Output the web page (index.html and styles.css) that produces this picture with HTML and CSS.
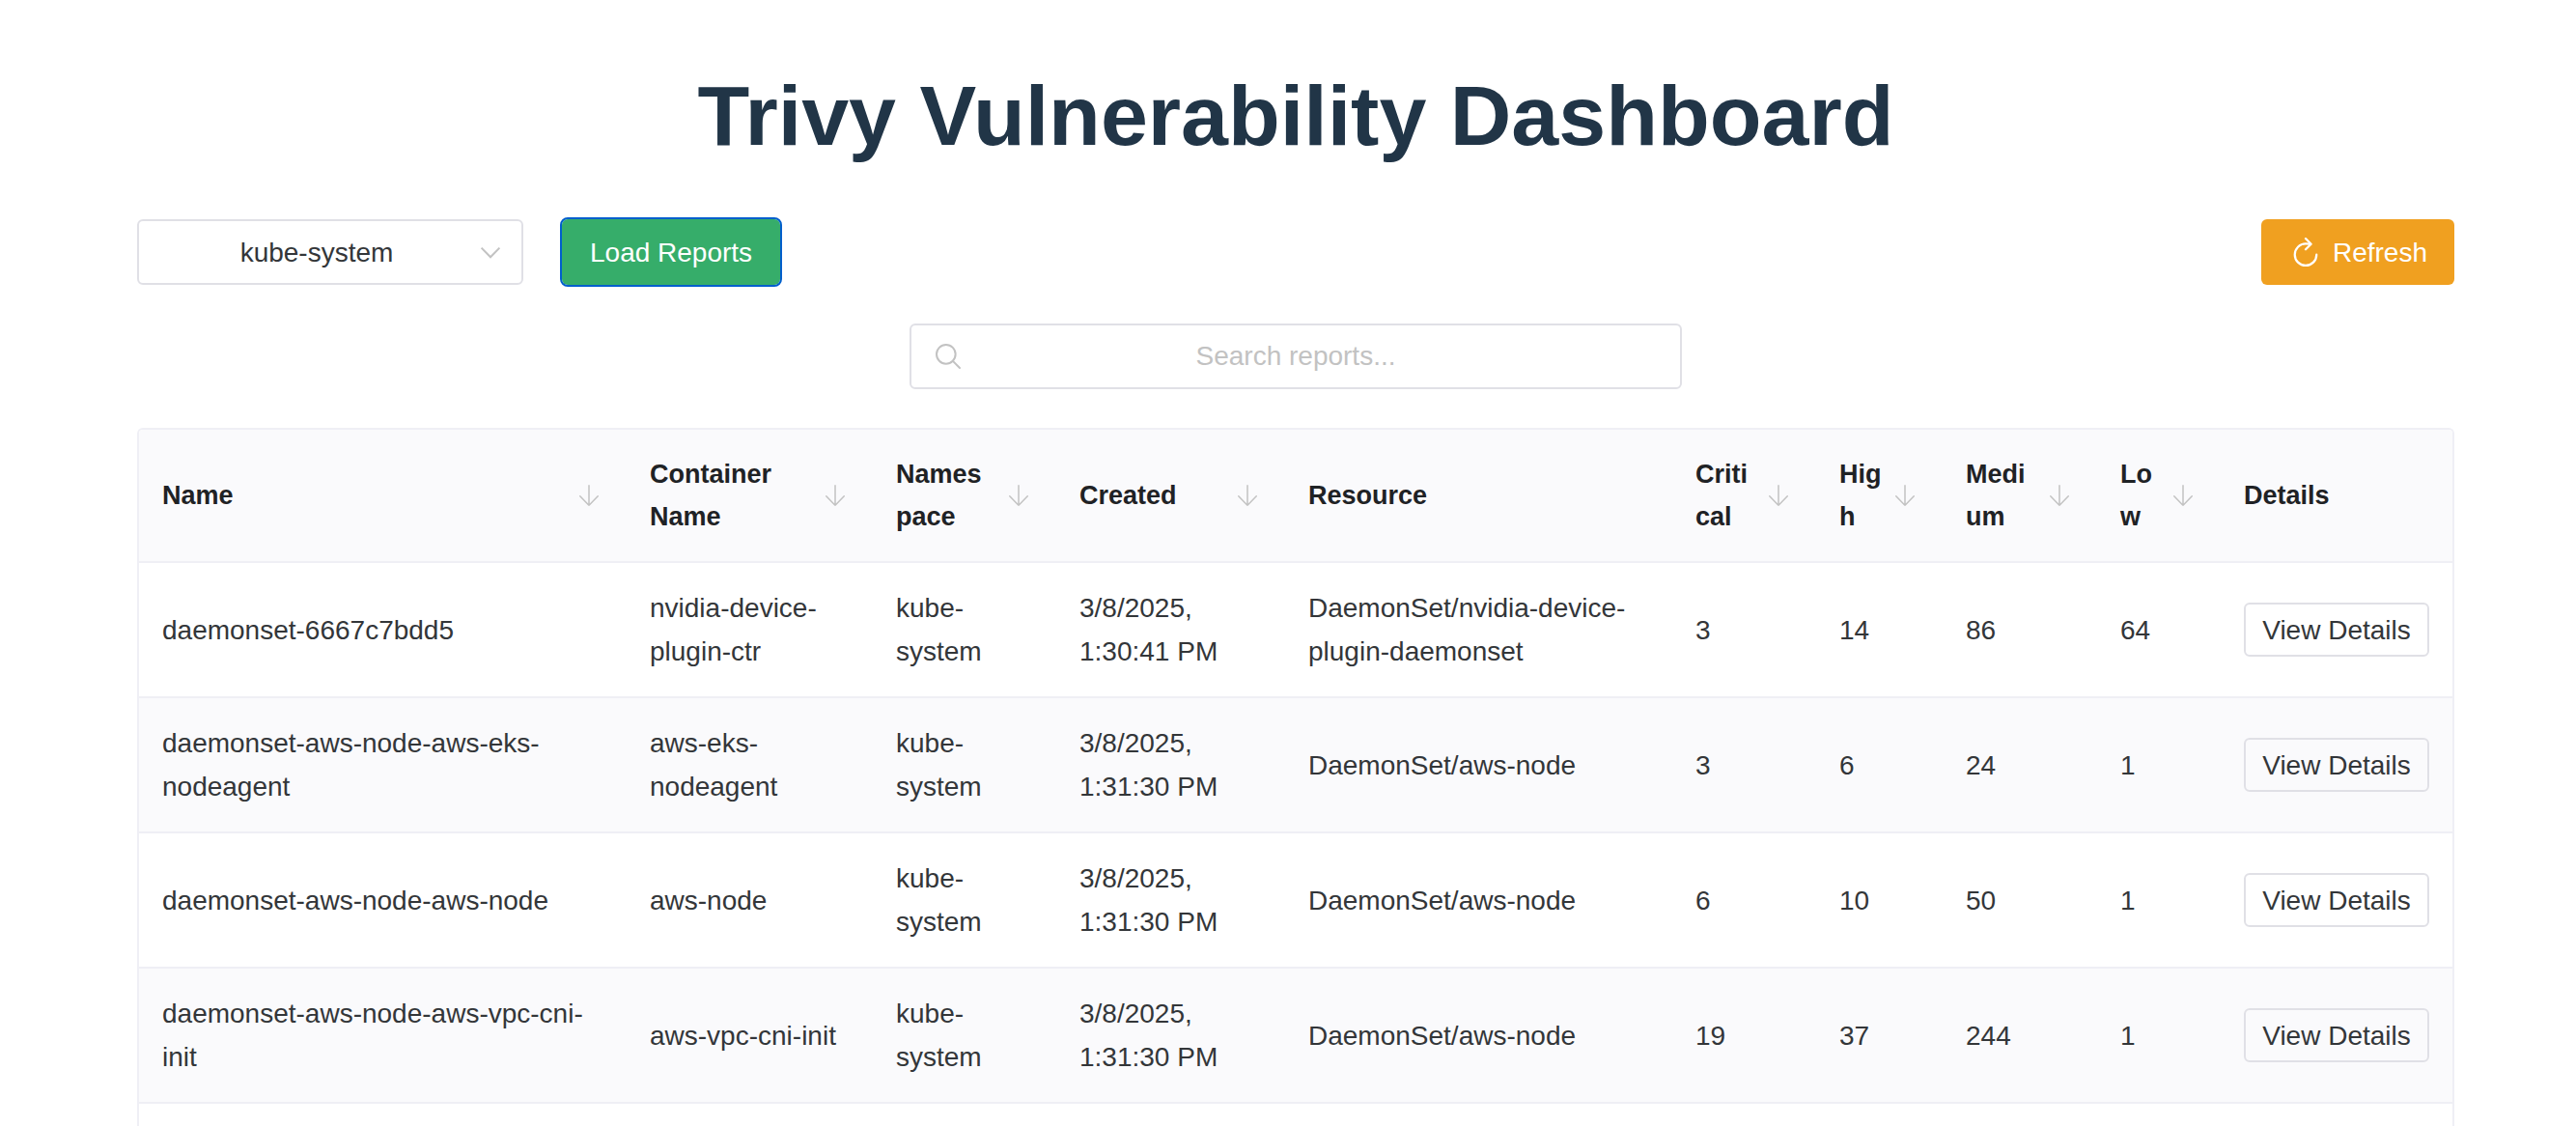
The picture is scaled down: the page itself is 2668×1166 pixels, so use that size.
FILE: index.html
```html
<!DOCTYPE html>
<html lang="en">
<head>
<meta charset="utf-8">
<meta name="viewport" content="width=device-width, initial-scale=1">
<title>Trivy Vulnerability Dashboard</title>
<link rel="stylesheet" href="styles.css">
</head>
<body>
<svg class="sprite" aria-hidden="true">
  <symbol id="arrow-down" viewBox="0 0 28 28">
    <path d="M23.79 15.26a.75.75 0 0 0-1.08-1.04l-7.96 8.27V3.75a.75.75 0 0 0-1.5 0v18.74l-7.96-8.27a.75.75 0 0 0-1.08 1.04l8.96 9.31a1.15 1.15 0 0 0 1.66 0z" fill="currentColor"/>
  </symbol>
</svg>
<main class="dashboard">
  <h1 class="title">Trivy Vulnerability Dashboard</h1>

  <div class="controls">
    <div class="select">
      <select class="select-input" aria-label="Namespace">
        <option>kube-system</option>
      </select>
      <svg class="select-icon" viewBox="0 0 16 16" aria-hidden="true"><path d="M3.3 5.8L8 10.6l4.7-4.8" fill="none" stroke="currentColor"/></svg>
    </div>
    <button class="btn btn-load" type="button">Load Reports</button>
    <button class="btn btn-refresh" type="button">
      <svg class="btn-icon" viewBox="0 0 512 512" aria-hidden="true"><path d="M320 146s24.36-12-64-12a160 160 0 1 0 160 160" fill="none" stroke="currentColor" stroke-linecap="round" stroke-miterlimit="10" stroke-width="32"/><path d="M256 58l80 80-80 80" fill="none" stroke="currentColor" stroke-linecap="round" stroke-linejoin="round" stroke-width="32"/></svg>
      Refresh
    </button>
  </div>

  <div class="search">
    <svg class="search-icon" viewBox="0 0 512 512" aria-hidden="true"><path d="M221.09 64a157.09 157.09 0 1 0 157.09 157.09A157.1 157.1 0 0 0 221.09 64z" fill="none" stroke="currentColor" stroke-miterlimit="10" stroke-width="32"/><path d="M338.29 338.29L448 448" fill="none" stroke="currentColor" stroke-linecap="round" stroke-miterlimit="10" stroke-width="32"/></svg>
    <input class="search-input" type="text" placeholder="Search reports..." aria-label="Search reports">
  </div>

  <div class="table-wrap">
    <table class="table">
      <colgroup>
        <col class="col-name"><col class="col-container"><col class="col-namespace"><col class="col-created"><col class="col-resource"><col class="col-critical"><col class="col-high"><col class="col-medium"><col class="col-low"><col class="col-details">
      </colgroup>
      <thead>
        <tr>
          <th scope="col"><div class="th"><span class="th-label">Name</span><svg class="sort"><use href="#arrow-down"/></svg></div></th>
          <th scope="col"><div class="th"><span class="th-label">Container Name</span><svg class="sort"><use href="#arrow-down"/></svg></div></th>
          <th scope="col"><div class="th"><span class="th-label">Namespace</span><svg class="sort"><use href="#arrow-down"/></svg></div></th>
          <th scope="col"><div class="th"><span class="th-label">Created</span><svg class="sort"><use href="#arrow-down"/></svg></div></th>
          <th scope="col">Resource</th>
          <th scope="col"><div class="th"><span class="th-label">Critical</span><svg class="sort"><use href="#arrow-down"/></svg></div></th>
          <th scope="col"><div class="th"><span class="th-label">High</span><svg class="sort"><use href="#arrow-down"/></svg></div></th>
          <th scope="col"><div class="th"><span class="th-label">Medium</span><svg class="sort"><use href="#arrow-down"/></svg></div></th>
          <th scope="col"><div class="th"><span class="th-label">Low</span><svg class="sort"><use href="#arrow-down"/></svg></div></th>
          <th scope="col">Details</th>
        </tr>
      </thead>
      <tbody>
        <tr>
          <td>daemonset-6667c7bdd5</td><td>nvidia-device-plugin-ctr</td><td>kube-system</td><td>3/8/2025, 1:30:41 PM</td><td>DaemonSet/nvidia-device-plugin-daemonset</td><td>3</td><td>14</td><td>86</td><td>64</td>
          <td><button class="btn-view" type="button">View Details</button></td>
        </tr>
        <tr>
          <td>daemonset-aws-node-aws-eks-nodeagent</td><td>aws-eks-nodeagent</td><td>kube-system</td><td>3/8/2025, 1:31:30 PM</td><td>DaemonSet/aws-node</td><td>3</td><td>6</td><td>24</td><td>1</td>
          <td><button class="btn-view" type="button">View Details</button></td>
        </tr>
        <tr>
          <td>daemonset-aws-node-aws-node</td><td>aws-node</td><td>kube-system</td><td>3/8/2025, 1:31:30 PM</td><td>DaemonSet/aws-node</td><td>6</td><td>10</td><td>50</td><td>1</td>
          <td><button class="btn-view" type="button">View Details</button></td>
        </tr>
        <tr>
          <td>daemonset-aws-node-aws-vpc-cni-init</td><td>aws-vpc-cni-init</td><td>kube-system</td><td>3/8/2025, 1:31:30 PM</td><td>DaemonSet/aws-node</td><td>19</td><td>37</td><td>244</td><td>1</td>
          <td><button class="btn-view" type="button">View Details</button></td>
        </tr>
      </tbody>
    </table>
  </div>
</main>
</body>
</html>
```
FILE: styles.css
```css
*, *::before, *::after { box-sizing: border-box; }

body {
  margin: 0;
  padding-left: 16px;
  background: #fff;
  color: #333639;
  font-family: "Liberation Sans", Arial, sans-serif;
  font-size: 28px;
  line-height: 45px;
}

button, input, select { font: inherit; }

.sprite { display: none; }

.dashboard {
  display: flex;
  flex-direction: column;
  max-width: 2400px;
  min-height: 100vh;
  margin: 0 auto;
  padding-top: 70px;
}

.title {
  margin: 0 0 57px;
  color: #213547;
  font-size: 88px;
  line-height: 100px;
  text-align: center;
}

.controls {
  display: flex;
  align-items: center;
  gap: 40px;
  margin-bottom: 40px;
}

.select {
  position: relative;
  width: 400px;
}

.select-input {
  display: block;
  width: 100%;
  height: 68px;
  padding: 0 50px 0 22px;
  border: 2px solid #e0e0e6;
  border-radius: 6px;
  appearance: none;
  background: #fff;
  color: #333639;
  text-align: center;
  text-align-last: center;
}

.select-icon {
  position: absolute;
  top: 18px;
  right: 18px;
  width: 32px;
  height: 32px;
  color: #c2c2c2;
  pointer-events: none;
}

.btn {
  display: flex;
  align-items: center;
  height: 68px;
  padding: 0 28px;
  border: 0;
  border-radius: 6px;
  color: #fff;
}

.btn-load {
  padding: 0 29px;
  background: #36ad6a;
  outline: 2px solid #005fcc;
}

.btn-refresh {
  gap: 10px;
  margin-left: auto;
  background: #f0a020;
}

.btn-icon {
  width: 36px;
  height: 36px;
}

.search {
  position: relative;
  width: 100%;
  max-width: 800px;
  margin: 0 auto 40px;
}

.search-input {
  display: block;
  width: 100%;
  height: 68px;
  padding: 0 60px;
  border: 2px solid #e0e0e6;
  border-radius: 6px;
  background: #fff;
  color: #333639;
  text-align: center;
}

.search-input::placeholder { color: #c2c2c2; opacity: 1; }

.search-icon {
  position: absolute;
  top: 18px;
  left: 24px;
  width: 32px;
  height: 32px;
  color: #c2c2c2;
}

.table-wrap {
  flex: 1;
  overflow: hidden;
  border: 2px solid #efeff5;
  border-bottom: 0;
  border-radius: 6px 6px 0 0;
}

.table {
  width: 100%;
  table-layout: fixed;
  border-collapse: separate;
  border-spacing: 0;
}

.col-name { width: 505px; }
.col-container { width: 255px; }
.col-namespace { width: 190px; }
.col-created { width: 237px; }
.col-resource { width: 401px; }
.col-critical { width: 149px; }
.col-high { width: 131px; }
.col-medium { width: 160px; }
.col-low { width: 128px; }
.col-details { width: 240px; }

th, td {
  padding: 24px;
  border-bottom: 2px solid #efeff5;
  text-align: left;
  vertical-align: middle;
}

th {
  background: #fafafc;
  color: #1f2225;
  font-size: 27px;
  line-height: 44px;
}

tbody tr:nth-child(even) td { background: #fafafc; }

.th {
  display: flex;
  align-items: center;
  gap: 8px;
}

.th-label {
  flex: 1;
  min-width: 0;
  overflow-wrap: anywhere;
}

.sort {
  flex: none;
  width: 30px;
  height: 30px;
  padding: 1px;
  color: #c2c2c2;
}

.btn-view {
  display: block;
  width: 100%;
  height: 56px;
  padding: 0;
  border: 2px solid #e0e0e6;
  border-radius: 6px;
  background: transparent;
  color: #333639;
  white-space: nowrap;
}
```
